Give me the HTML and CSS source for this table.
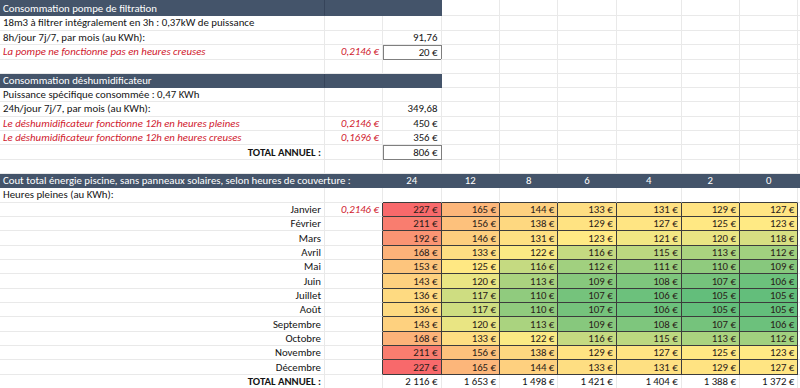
FILE: index.html
```html
<!DOCTYPE html>
<html lang="fr">
<head>
<meta charset="utf-8">
<title>Consommation piscine</title>
<link rel="stylesheet" href="styles.css">
</head>
<body>
<div class="sheet">
  <div class="row top">
    <div class="c hd hdA">Consommation pompe de filtration</div>
    <div class="c hd span2"></div>
    <div class="c"></div><div class="c"></div><div class="c"></div><div class="c"></div><div class="c"></div><div class="c"></div><div class="c"></div>
  </div>
  <div class="row">
    <div class="c">18m3 à filtrer intégralement en 3h : 0,37kW de puissance</div>
    <div class="c"></div><div class="c"></div><div class="c"></div><div class="c"></div><div class="c"></div><div class="c"></div><div class="c"></div><div class="c"></div><div class="c"></div>
  </div>
  <div class="row">
    <div class="c">8h/jour 7j/7, par mois (au KWh):</div>
    <div class="c"></div><div class="c num">91,76</div><div class="c"></div><div class="c"></div><div class="c"></div><div class="c"></div><div class="c"></div><div class="c"></div><div class="c"></div>
  </div>
  <div class="row">
    <div class="c red">La pompe ne fonctionne pas en heures creuses</div>
    <div class="c num red">0,2146 €</div><div class="c num box">20 €</div><div class="c"></div><div class="c"></div><div class="c"></div><div class="c"></div><div class="c"></div><div class="c"></div><div class="c"></div>
  </div>
  <div class="row">
    <div class="c"></div><div class="c"></div><div class="c"></div><div class="c"></div><div class="c"></div><div class="c"></div><div class="c"></div><div class="c"></div><div class="c"></div><div class="c"></div>
  </div>
  <div class="row">
    <div class="c hd hdA">Consommation déshumidificateur</div>
    <div class="c hd span2"></div>
    <div class="c"></div><div class="c"></div><div class="c"></div><div class="c"></div><div class="c"></div><div class="c"></div><div class="c"></div>
  </div>
  <div class="row">
    <div class="c">Puissance spécifique consommée : 0,47 KWh</div>
    <div class="c"></div><div class="c"></div><div class="c"></div><div class="c"></div><div class="c"></div><div class="c"></div><div class="c"></div><div class="c"></div><div class="c"></div>
  </div>
  <div class="row">
    <div class="c">24h/jour 7j/7, par mois (au KWh):</div>
    <div class="c"></div><div class="c num">349,68</div><div class="c"></div><div class="c"></div><div class="c"></div><div class="c"></div><div class="c"></div><div class="c"></div><div class="c"></div>
  </div>
  <div class="row">
    <div class="c red">Le déshumidificateur fonctionne 12h en heures pleines</div>
    <div class="c num red">0,2146 €</div><div class="c num">450 €</div><div class="c"></div><div class="c"></div><div class="c"></div><div class="c"></div><div class="c"></div><div class="c"></div><div class="c"></div>
  </div>
  <div class="row">
    <div class="c red">Le déshumidificateur fonctionne 12h en heures creuses</div>
    <div class="c num red">0,1696 €</div><div class="c num">356 €</div><div class="c"></div><div class="c"></div><div class="c"></div><div class="c"></div><div class="c"></div><div class="c"></div><div class="c"></div>
  </div>
  <div class="row">
    <div class="c num bold">TOTAL ANNUEL :</div>
    <div class="c"></div><div class="c num box">806 €</div><div class="c"></div><div class="c"></div><div class="c"></div><div class="c"></div><div class="c"></div><div class="c"></div><div class="c"></div>
  </div>
  <div class="row">
    <div class="c"></div><div class="c"></div><div class="c"></div><div class="c"></div><div class="c"></div><div class="c"></div><div class="c"></div><div class="c"></div><div class="c"></div><div class="c"></div>
  </div>
  <div class="row">
    <div class="c hd span2">Cout total énergie piscine, sans panneaux solaires, selon heures de couverture :</div>
    <div class="c hd ctr">24</div><div class="c hd ctr">12</div><div class="c hd ctr">8</div><div class="c hd ctr">6</div><div class="c hd ctr">4</div><div class="c hd ctr">2</div><div class="c hd ctr">0</div><div class="c hd"></div>
  </div>
  <div class="row">
    <div class="c">Heures pleines (au KWh):</div>
    <div class="c"></div><div class="c above"></div><div class="c above"></div><div class="c above"></div><div class="c above"></div><div class="c above"></div><div class="c above"></div><div class="c above"></div><div class="c"></div>
  </div>
  <div class="row"><div class="c num">Janvier</div><div class="c num red lead">0,2146 €</div>
    <div class="c num heat" style="background:#f8696b">227 €</div><div class="c num heat" style="background:#fcb67a">165 €</div><div class="c num heat" style="background:#fed07f">144 €</div><div class="c num heat" style="background:#fede82">133 €</div><div class="c num heat" style="background:#fee082">131 €</div><div class="c num heat" style="background:#ffe382">129 €</div><div class="c num heat" style="background:#ffe583">127 €</div><div class="c"></div></div>
  <div class="row"><div class="c num">Février</div><div class="c lead"></div>
    <div class="c num heat" style="background:#f97d6f">211 €</div><div class="c num heat" style="background:#fdc17c">156 €</div><div class="c num heat" style="background:#fed880">138 €</div><div class="c num heat" style="background:#ffe382">129 €</div><div class="c num heat" style="background:#ffe583">127 €</div><div class="c num heat" style="background:#ffe883">125 €</div><div class="c num heat" style="background:#ffea84">123 €</div><div class="c"></div></div>
  <div class="row"><div class="c num">Mars</div><div class="c lead"></div>
    <div class="c num heat" style="background:#fa9473">192 €</div><div class="c num heat" style="background:#fdce7e">146 €</div><div class="c num heat" style="background:#fee082">131 €</div><div class="c num heat" style="background:#ffea84">123 €</div><div class="c num heat" style="background:#f2e783">121 €</div><div class="c num heat" style="background:#e9e583">120 €</div><div class="c num heat" style="background:#d7df82">118 €</div><div class="c"></div></div>
  <div class="row"><div class="c num">Avril</div><div class="c lead"></div>
    <div class="c num heat" style="background:#fcb279">168 €</div><div class="c num heat" style="background:#fede82">133 €</div><div class="c num heat" style="background:#fbea84">122 €</div><div class="c num heat" style="background:#c5da81">116 €</div><div class="c num heat" style="background:#bcd880">115 €</div><div class="c num heat" style="background:#aad37f">113 €</div><div class="c num heat" style="background:#a1d07f">112 €</div><div class="c"></div></div>
  <div class="row"><div class="c num">Mai</div><div class="c lead"></div>
    <div class="c num heat" style="background:#fdc57d">153 €</div><div class="c num heat" style="background:#ffe883">125 €</div><div class="c num heat" style="background:#c5da81">116 €</div><div class="c num heat" style="background:#a1d07f">112 €</div><div class="c num heat" style="background:#99cd7e">111 €</div><div class="c num heat" style="background:#90cb7e">110 €</div><div class="c num heat" style="background:#87c87d">109 €</div><div class="c"></div></div>
  <div class="row"><div class="c num">Juin</div><div class="c lead"></div>
    <div class="c num heat" style="background:#fed17f">143 €</div><div class="c num heat" style="background:#e9e583">120 €</div><div class="c num heat" style="background:#aad37f">113 €</div><div class="c num heat" style="background:#87c87d">109 €</div><div class="c num heat" style="background:#7ec67d">108 €</div><div class="c num heat" style="background:#75c37c">107 €</div><div class="c num heat" style="background:#6cc17c">106 €</div><div class="c"></div></div>
  <div class="row"><div class="c num">Juillet</div><div class="c lead"></div>
    <div class="c num heat" style="background:#feda81">136 €</div><div class="c num heat" style="background:#cedd81">117 €</div><div class="c num heat" style="background:#90cb7e">110 €</div><div class="c num heat" style="background:#75c37c">107 €</div><div class="c num heat" style="background:#6cc17c">106 €</div><div class="c num heat" style="background:#63be7b">105 €</div><div class="c num heat" style="background:#63be7b">105 €</div><div class="c"></div></div>
  <div class="row"><div class="c num">Août</div><div class="c lead"></div>
    <div class="c num heat" style="background:#feda81">136 €</div><div class="c num heat" style="background:#cedd81">117 €</div><div class="c num heat" style="background:#90cb7e">110 €</div><div class="c num heat" style="background:#75c37c">107 €</div><div class="c num heat" style="background:#6cc17c">106 €</div><div class="c num heat" style="background:#63be7b">105 €</div><div class="c num heat" style="background:#63be7b">105 €</div><div class="c"></div></div>
  <div class="row"><div class="c num">Septembre</div><div class="c lead"></div>
    <div class="c num heat" style="background:#fed17f">143 €</div><div class="c num heat" style="background:#e9e583">120 €</div><div class="c num heat" style="background:#aad37f">113 €</div><div class="c num heat" style="background:#87c87d">109 €</div><div class="c num heat" style="background:#7ec67d">108 €</div><div class="c num heat" style="background:#75c37c">107 €</div><div class="c num heat" style="background:#6cc17c">106 €</div><div class="c"></div></div>
  <div class="row"><div class="c num">Octobre</div><div class="c lead"></div>
    <div class="c num heat" style="background:#fcb279">168 €</div><div class="c num heat" style="background:#fede82">133 €</div><div class="c num heat" style="background:#fbea84">122 €</div><div class="c num heat" style="background:#c5da81">116 €</div><div class="c num heat" style="background:#bcd880">115 €</div><div class="c num heat" style="background:#aad37f">113 €</div><div class="c num heat" style="background:#a1d07f">112 €</div><div class="c"></div></div>
  <div class="row"><div class="c num">Novembre</div><div class="c lead"></div>
    <div class="c num heat" style="background:#f97d6f">211 €</div><div class="c num heat" style="background:#fdc17c">156 €</div><div class="c num heat" style="background:#fed880">138 €</div><div class="c num heat" style="background:#ffe382">129 €</div><div class="c num heat" style="background:#ffe583">127 €</div><div class="c num heat" style="background:#ffe883">125 €</div><div class="c num heat" style="background:#ffea84">123 €</div><div class="c"></div></div>
  <div class="row"><div class="c num">Décembre</div><div class="c lead"></div>
    <div class="c num heat" style="background:#f8696b">227 €</div><div class="c num heat" style="background:#fcb67a">165 €</div><div class="c num heat" style="background:#fed07f">144 €</div><div class="c num heat" style="background:#fede82">133 €</div><div class="c num heat" style="background:#fee082">131 €</div><div class="c num heat" style="background:#ffe382">129 €</div><div class="c num heat" style="background:#ffe583">127 €</div><div class="c"></div></div>
  <div class="row">
    <div class="c num bold">TOTAL ANNUEL :</div><div class="c"></div>
    <div class="c num">2 116 €</div><div class="c num">1 653 €</div><div class="c num">1 498 €</div><div class="c num">1 421 €</div><div class="c num">1 404 €</div><div class="c num">1 388 €</div><div class="c num">1 372 €</div><div class="c"></div>
  </div>
</div>
</body>
</html>
```
FILE: styles.css
```css
html, body {
  margin: 0;
  padding: 0;
  background: #ffffff;
}
body {
  width: 800px;
  height: 388px;
  overflow: hidden;
  font-family: Calibri, Carlito, Lato, "Liberation Sans", sans-serif;
  font-size: 10.8px;
  color: #141414;
}
.sheet {
  display: flex;
  flex-direction: column;
}
.row {
  display: grid;
  grid-template-columns: 325px 58px 58.5px 58.5px 58.3px 58.4px 65px 58.3px 58.3px 1fr;
  height: 14.35px;
}
.row.top {
  height: 16.2px;
}
.row.top .c {
  padding-top: 1.8px;
}
.c {
  box-sizing: border-box;
  display: flex;
  align-items: center;
  padding: 0 3px;
  white-space: nowrap;
  overflow: visible;
  border-right: 1px solid #e9e9e9;
  border-bottom: 1px solid #e9e9e9;
  min-width: 0;
}
.num {
  justify-content: flex-end;
}
.ctr {
  justify-content: center;
}
.red {
  color: #d0202e;
  font-style: italic;
}
.bold {
  font-weight: bold;
}
.hd {
  background: #44546a;
  color: #ffffff;
  border-right-color: #44546a;
  border-bottom-color: #44546a;
}
.hdA {
  border-right-color: #36445a;
}
.span2 {
  grid-column: span 2;
}
.box {
  border: 1px solid #7f7f7f;
}
.above {
  border-bottom-color: #3c3c3c;
}
.lead {
  border-right-color: #3c3c3c;
}
.heat {
  border-right-color: #3c3c3c;
  border-bottom-color: #3c3c3c;
  color: #2a2018;
}
```
